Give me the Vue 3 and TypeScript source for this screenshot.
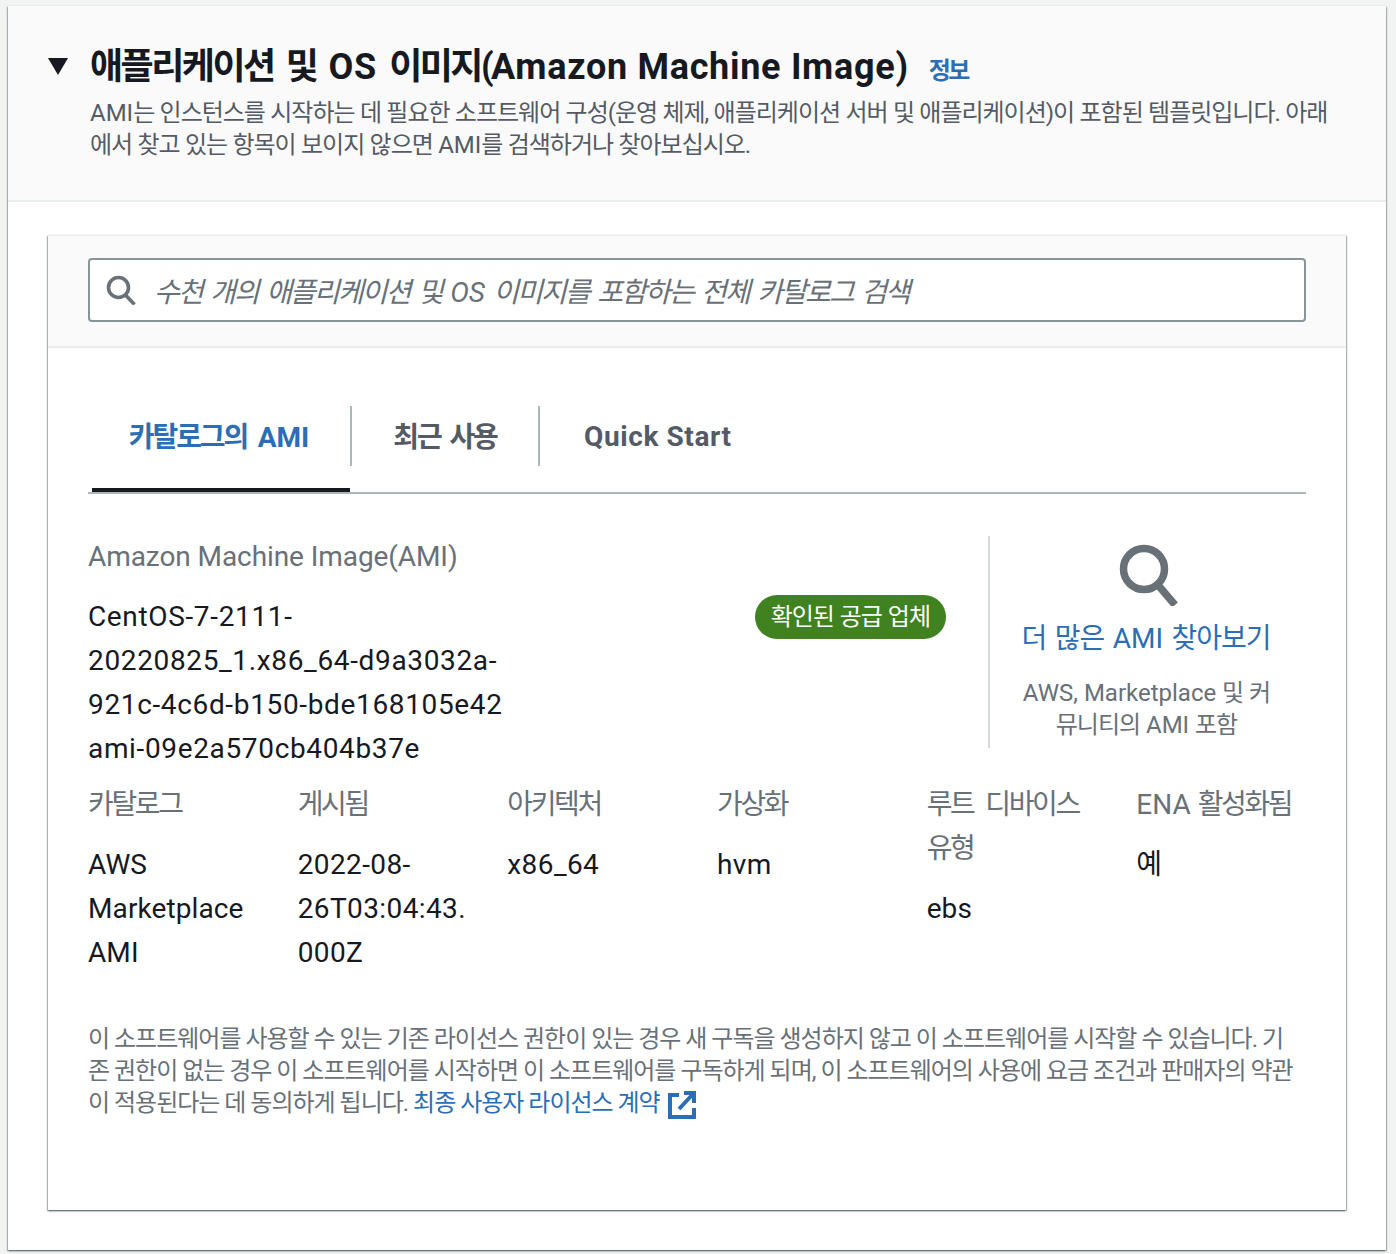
<script setup lang="ts">
const specs: { label: string; latin?: string; value: string; tight?: boolean }[] = [
  { label: '카탈로그', value: 'AWS Marketplace AMI', tight: true },
  { label: '게시됨', value: '2022-08-26T03:04:43.000Z' },
  { label: '아키텍처', value: 'x86_64' },
  { label: '가상화', value: 'hvm' },
  { label: '루트 디바이스 유형', value: 'ebs', tight: true },
  { label: '활성화됨', latin: 'ENA', value: '예' }
]
</script>

<template>
  <div class="page">
    <section class="outer">
      <header class="head">
        <svg class="caret" width="22" height="18" viewBox="0 0 22 18"><path d="M1 1h20L11 18z" fill="#16191f" /></svg>
        <div class="head-text">
          <h2 class="title">애플리케이션 및 <span class="lat">OS</span> 이미지(<span class="lat">Amazon Machine Image</span>) <a class="info">정보</a></h2>
          <p class="desc"><span class="lat">AMI</span>는 인스턴스를 시작하는 데 필요한 소프트웨어 구성(운영 체제, 애플리케이션 서버 및 애플리케이션)이 포함된 템플릿입니다. 아래에서 찾고 있는 항목이 보이지 않으면 <span class="lat">AMI</span>를 검색하거나 찾아보십시오.</p>
        </div>
      </header>
      <div class="outer-body">
        <div class="inner">
          <div class="search-strip">
            <div class="search">
              <svg width="30" height="30" viewBox="0 0 30 30" fill="none" stroke="#687078" stroke-width="3.6"><circle cx="12.5" cy="12.5" r="10" /><path d="M19.5 20l9 9.5" /></svg>
              <span class="placeholder">수천 개의 애플리케이션 및 <span class="lat">OS</span> 이미지를 포함하는 전체 카탈로그 검색</span>
            </div>
          </div>
          <div class="inner-body">
            <nav class="tabs">
              <div class="tab active"><span class="tab-label">카탈로그의 <span class="lat">AMI</span></span></div>
              <div class="tab second"><span class="tab-label">최근 사용</span></div>
              <div class="tab third"><span class="tab-label quick">Quick Start</span></div>
            </nav>
            <div class="ami-row">
              <div class="ami-main">
                <div class="ami-info">
                  <div class="muted-label latin-label">Amazon Machine Image(AMI)</div>
                  <div class="ami-name">CentOS-7-2111-20220825_1.x86_64-d9a3032a-921c-4c6d-b150-bde168105e42</div>
                  <div class="ami-name">ami-09e2a570cb404b37e</div>
                </div>
                <span class="badge">확인된 공급 업체</span>
              </div>
              <aside class="more">
                <svg width="62" height="62" viewBox="0 0 62 62" fill="none" stroke="#687078" stroke-width="7.5"><circle cx="25" cy="25" r="20.5" /><path d="M39 41l17 20" /></svg>
                <a class="more-link">더 많은 <span class="lat">AMI</span> 찾아보기</a>
                <p class="more-note"><span class="lat">AWS, Marketplace</span> 및 커뮤니티의 <span class="lat">AMI</span> 포함</p>
              </aside>
            </div>
            <div class="specs">
              <div v-for="s in specs" :key="s.label" class="spec">
                <div class="muted-label spec-label"><span v-if="s.latin" class="lat ena">{{ s.latin }}</span>{{ s.label }}</div>
                <div class="spec-value" :class="{ tight: s.tight }">{{ s.value }}</div>
              </div>
            </div>
            <p class="terms">이 소프트웨어를 사용할 수 있는 기존 라이선스 권한이 있는 경우 새 구독을 생성하지 않고 이 소프트웨어를 시작할 수 있습니다. 기존 권한이 없는 경우 이 소프트웨어를 시작하면 이 소프트웨어를 구독하게 되며, 이 소프트웨어의 사용에 요금 조건과 판매자의 약관이 적용된다는 데 동의하게 됩니다. <a class="link">최종 사용자 라이선스 계약</a>
              <svg class="ext" width="28" height="28" viewBox="0 0 28 28" fill="none" stroke="#2c6eb5" stroke-width="4"><path d="M11 4H2v22h24v-9" /><path d="M16 2h10v10" /><path d="M25 3L11 18" /></svg>
            </p>
          </div>
        </div>
      </div>
    </section>
  </div>
</template>

<style>
html, body { margin: 0; background: #f2f3f3; }
</style>

<style scoped>
.page {
  width: 1396px;
  height: 1254px;
  box-sizing: border-box;
  padding: 6px 10px 0 8px;
  font-family: Roboto, "Noto Sans CJK KR", sans-serif;
  color: #16191f;
  letter-spacing: -0.063em;
  word-spacing: 0.06em;
}
.lat { letter-spacing: 0; word-spacing: 0; }
.outer {
  height: 1244px;
  box-sizing: border-box;
  background: #fff;
  box-shadow: 0 1px 2px 0 rgba(0, 28, 36, 0.5), 1px 1px 1px 0 rgba(0, 28, 36, 0.18), -1px 1px 1px 0 rgba(0, 28, 36, 0.18);
}
.head {
  height: 196px;
  box-sizing: border-box;
  background: #fafafa;
  border-bottom: 2px solid #eaeded;
  display: flex;
  padding: 51px 40px 0 39px;
}
.caret { flex: none; }
.head-text { margin-left: 21px; }
.title {
  margin: -12px 0 0;
  font-size: 36px;
  line-height: 44px;
  font-weight: 700;
  white-space: nowrap;
  letter-spacing: -0.07em;
  word-spacing: 0.16em;
}
.title .lat { letter-spacing: 0.7px; word-spacing: 0; }
.info {
  font-size: 24px;
  font-weight: 700;
  color: #2c6eb5;
  margin-left: 11px;
}
.desc {
  margin: 4px 0 0;
  font-size: 24px;
  line-height: 32px;
  color: #545b64;
  word-spacing: 0.4px;
}
.outer-body { padding: 33px 40px 0; }
.inner {
  height: 975px;
  box-sizing: border-box;
  background: #fff;
  box-shadow: 0 1px 2px 0 rgba(0, 28, 36, 0.5), 1px 1px 1px 0 rgba(0, 28, 36, 0.2), -1px 1px 1px 0 rgba(0, 28, 36, 0.2);
  border-top: 1px solid #eaeded;
}
.search-strip {
  height: 112px;
  box-sizing: border-box;
  padding: 22px 40px 0;
  background: #fafafa;
  border-bottom: 2px solid #eaeded;
}
.search {
  height: 64px;
  box-sizing: border-box;
  border: 2px solid #879596;
  border-radius: 4px;
  background: #fff;
  display: flex;
  align-items: center;
  padding-left: 16px;
  gap: 18px;
}
.placeholder {
  font-size: 28px;
  font-style: italic;
  color: #687078;
  white-space: nowrap;
  letter-spacing: -0.066em;
  word-spacing: 0.116em;
}
.inner-body { padding: 58px 40px 0; }
.tabs {
  display: flex;
  height: 86px;
  border-bottom: 2px solid #aab7b8;
  position: relative;
}
.tab {
  height: 60px;
  display: flex;
  align-items: center;
  justify-content: center;
  box-sizing: border-box;
  font-size: 28px;
  font-weight: 700;
  color: #545b64;
  white-space: nowrap;
  letter-spacing: -0.075em;
  word-spacing: 0.14em;
}
.tab-label { margin-top: -2px; }
.tab-label.quick { letter-spacing: 0.6px; word-spacing: 0; margin-top: 0; }
.tab.active {
  width: 264px;
  color: #2c6eb5;
  border-right: 2px solid #aab7b8;
  position: relative;
  word-spacing: 0.2em;
}
.tab.active::after {
  content: "";
  position: absolute;
  left: 4px;
  right: 0;
  top: 82px;
  height: 4px;
  background: #16191f;
}
.tab.second { width: 188px; border-right: 2px solid #aab7b8; }
.tab.third { padding-left: 44px; }
.ami-row {
  display: flex;
  margin-top: 42px;
  height: 212px;
}
.ami-main {
  width: 858px;
  margin-right: 42px;
  display: flex;
  justify-content: space-between;
  flex: none;
}
.ami-info { width: 440px; }
.muted-label {
  font-size: 28px;
  line-height: 44px;
  color: #687078;
}
.latin-label { letter-spacing: -0.08px; word-spacing: 0; }
.ami-name {
  font-size: 28px;
  line-height: 44px;
  color: #16191f;
  word-break: break-word;
  letter-spacing: 0.65px;
  word-spacing: 0;
}
.ami-info .muted-label { margin-top: -1px; margin-bottom: 16px; }
.badge {
  align-self: flex-start;
  margin-top: 59px;
  height: 44px;
  padding: 3px 16px 0;
  border-radius: 22px;
  background: #3f821f;
  color: #fff;
  font-size: 24px;
  line-height: 38px;
  white-space: nowrap;
  box-sizing: border-box;
}
.more {
  flex: none;
  width: 318px;
  border-left: 2px solid #d5dbdb;
  box-sizing: border-box;
  display: flex;
  flex-direction: column;
  align-items: center;
  padding: 8px 0 0 0;
  text-align: center;
}
.more svg { margin-left: 3px; }
.more-link {
  margin-top: 11px;
  margin-right: 4px;
  font-size: 28px;
  line-height: 44px;
  color: #2c6eb5;
  white-space: nowrap;
  word-spacing: 0.09em;
}
.more-note {
  margin: 16px 3px 0 0;
  width: 260px;
  font-size: 24px;
  line-height: 32px;
  color: #687078;
}
.specs {
  display: grid;
  grid-template-columns: repeat(6, 1fr);
  column-gap: 40px;
  margin-top: 35px;
}
.spec:last-child { white-space: nowrap; }
.spec-label { margin-bottom: 16px; letter-spacing: -0.085em; word-spacing: 0.26em; }
.ena { margin-right: 7px; }
.spec-value {
  font-size: 28px;
  line-height: 44px;
  word-break: break-word;
  letter-spacing: 0.4px;
  word-spacing: 0;
}
.spec-value.tight { letter-spacing: 0.1px; }
.terms {
  margin: 48px 0 0;
  padding-right: 6px;
  font-size: 24px;
  line-height: 32px;
  color: #687078;
  word-spacing: 0;
}
.link { color: #2c6eb5; }
.ext { vertical-align: -8px; margin-left: 8px; }
</style>
